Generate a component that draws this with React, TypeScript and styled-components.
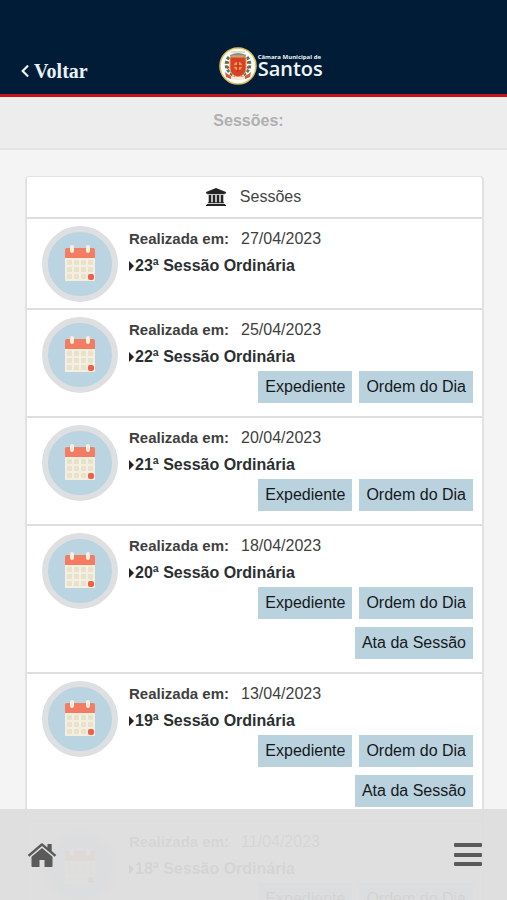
import React from "react";
import styled, { createGlobalStyle } from "styled-components";
import { FaChevronLeft } from "react-icons/fa";

const GlobalStyle = createGlobalStyle`
  * { box-sizing: border-box; }
  html { scrollbar-width: none; }
  body {
    margin: 0;
    background: #f4f4f4;
    color: #333;
    font-family: "Liberation Sans", Arial, sans-serif;
    font-size: 16px;
  }
`;

const Header = styled.header`
  display: grid;
  grid-template-columns: 11fr auto 9fr;
  align-items: center;
  height: 97px;
  padding: 37px 20px 0 18px;
  background: #001c36;
  border-bottom: 3px solid #c5161f;
`;

const BackLink = styled.a`
  display: flex;
  align-items: center;
  gap: 2px;
  padding-top: 10px;
  color: #e9f1f8;
  font: bold 20px/24px "Liberation Serif", serif;
  text-decoration: none;
`;

const Brand = styled.a`
  display: flex;
  align-items: center;
  gap: 1px;
  color: #f1f5f8;
  text-decoration: none;
`;

const BrandText = styled.span`
  display: flex;
  flex-direction: column;
  font-family: "Open Sans", sans-serif;
`;

const BrandSmall = styled.span`
  font-size: 6px;
  font-weight: 700;
  line-height: 6px;
`;

const BrandName = styled.span`
  font-size: 20px;
  font-weight: 600;
  line-height: 18px;
`;

const TitleBar = styled.h1`
  display: flex;
  align-items: center;
  justify-content: center;
  height: 53px;
  margin: 0;
  padding: 0 10px 4px 0;
  background: #ededed;
  border-bottom: 2px solid #e3e3e3;
  color: #b0b0b0;
  font-size: 16px;
  font-weight: 700;
`;

const Card = styled.main`
  margin: 26px 23px 100px 25px;
  background: #fff;
  border: 2px solid #e2e2e2;
  border-top-width: 1px;
  border-radius: 4px;
`;

const CardTitle = styled.h2`
  display: flex;
  align-items: center;
  justify-content: center;
  gap: 14px;
  height: 42px;
  margin: 0;
  padding-right: 2px;
  border-bottom: 2px solid #dedede;
  color: #444;
  font-size: 16px;
  font-weight: 400;
`;

const List = styled.ul`
  margin: 0;
  padding: 0;
  list-style: none;
`;

const Item = styled.li`
  display: flex;
  gap: 11px;
  padding: 7px 9px 6px 15px;
  border-bottom: 2px solid #dedede;
`;

const Avatar = styled.span`
  display: grid;
  place-items: center;
  flex: none;
  width: 76px;
  height: 76px;
  border: 6px solid #dddfe0;
  border-radius: 50%;
  background: #bad4e1;
`;

const Details = styled.div`
  flex: 1;
  min-width: 0;
`;

const Meta = styled.p`
  display: flex;
  align-items: baseline;
  gap: 12px;
  height: 26px;
  margin: 0;
  color: #3f3f3f;
  line-height: 26px;
`;

const MetaLabel = styled.b`
  font-size: 15px;
`;

const DateText = styled.time`
  font-size: 16px;
`;

const SessionTitle = styled.h3`
  display: flex;
  align-items: center;
  gap: 1px;
  height: 28px;
  margin: 0;
  color: #2b2f31;
  font-size: 16px;
`;

const Actions = styled.div`
  display: flex;
  flex-wrap: wrap;
  justify-content: flex-end;
  gap: 8px 7px;
  padding: 0 0 7px 40px;
`;

const ActionButton = styled.button`
  height: 32px;
  padding: 0 7px;
  border: 0;
  background: #bad2de;
  color: #15191c;
  font: 16px "Liberation Sans", Arial, sans-serif;
`;

const BottomBar = styled.nav`
  position: fixed;
  right: 0;
  bottom: 0;
  left: 0;
  display: flex;
  align-items: center;
  justify-content: space-between;
  height: 91px;
  padding: 0 25px 0 27px;
  background: rgba(221, 221, 221, 0.95);
`;

const BarButton = styled.button`
  display: flex;
  padding: 0;
  border: 0;
  background: none;
  color: #5a5a5a;
`;

const Crest = () => (
  <svg width="38" height="38" viewBox="0 0 38 38" aria-hidden="true">
    <circle cx="19" cy="19" r="18" fill="#fff" stroke="#e2bd55" strokeWidth="1.6" />
    <path d="M11 8q8-4 16 0l-1 3H12z" fill="#8c8d84" />
    <path d="M12 5h14M13 9h12" stroke="#c8b78a" strokeWidth="1" />
    <path d="M10 10C4 17 8 26 16 29M28 10c6 7 2 16-6 19" fill="none" stroke="#458059" strokeWidth="3" strokeDasharray="3 1.5" />
    <path d="M8 15l2 1M8 21l2-1M30 15l-2 1M30 21l-2-1" stroke="#c83d32" strokeWidth="2" />
    <path d="M11 10h16v12q0 6-8 8-8-2-8-8z" fill="#d8402c" stroke="#e2aa4a" />
    <circle cx="19" cy="19" r="4.2" fill="#ef9b3d" />
    <path d="M19 13v12M15 19h8" stroke="#c92f26" strokeWidth="1.6" />
    <path d="M6 25q5 5 13 5t13-5l-1 5-5 2H12l-5-2z" fill="#d95540" />
    <path d="M12 29q7 2 14 0v3q-7 2-14 0z" fill="#f7e6d6" />
  </svg>
);

const CalendarIcon = () => (
  <svg width="32" height="40" viewBox="0 0 32 40" aria-hidden="true">
    <path d="M1 13h30v24H1z" fill="#f6efdf" />
    <path d="M3 4h26a2 2 0 0 1 2 2v8H1V6a2 2 0 0 1 2-2z" fill="#f47c62" />
    <rect x="6" y="1" width="4" height="8" rx="2" fill="#f8efdf" />
    <rect x="22" y="1" width="4" height="8" rx="2" fill="#f8efdf" />
    <g fill="#e6e2cc">
      {[16, 23, 30].map((y) =>
        [3, 10, 17, 24].map((x) => <rect key={`${x}-${y}`} x={x} y={y} width="5" height="5" />)
      )}
    </g>
    <rect x="24" y="30" width="6" height="6" rx="2" fill="#ee6047" />
  </svg>
);

const BankIcon = () => (
  <svg width="20" height="18" viewBox="0 0 20 18" fill="#252525" aria-hidden="true">
    <path d="M10 0l10 4v1.4h-1.3v.8H1.3v-.8H0V4z" />
    <path d="M2.7 7h2.6v7.3h1.4V7h2.6v7.3h1.4V7h2.6v7.3h1.4V7h2.6v7.3h.8v1H1.9v-1h.8z" />
    <path d="M1 16h18v.8h1V18H0v-1.2h1z" />
  </svg>
);

const Caret = () => (
  <svg width="5" height="10" viewBox="0 0 5 10" fill="#222" aria-hidden="true">
    <path d="M0 0l5 5-5 5z" />
  </svg>
);

const HomeIcon = () => (
  <svg width="30" height="26" viewBox="0 0 30 26" fill="#5a5a5a" aria-hidden="true">
    <path d="M15 6l10.5 8.8V24q0 1-1 1h-7v-7h-5v7h-7q-1 0-1-1v-9.2z" />
    <path d="M15 1l5.5 4.6V2h4.2v7.1l4.6 3.8-1.6 1.9L15 4.1 2.3 14.8.7 12.9 13.8 1.7Q15 .6 16.2 1.7z" />
  </svg>
);

const MenuIcon = () => (
  <svg width="28" height="26" viewBox="0 0 28 26" fill="#5a5a5a" aria-hidden="true">
    <rect y="1" width="28" height="4" rx="1" />
    <rect y="11" width="28" height="4" rx="1" />
    <rect y="20" width="28" height="4" rx="1" />
  </svg>
);

const BOTH = ["Expediente", "Ordem do Dia"];
const ALL = [...BOTH, "Ata da Sessão"];

const sessions = [
  { date: "27/04/2023", number: 23, actions: [] as string[] },
  { date: "25/04/2023", number: 22, actions: BOTH },
  { date: "20/04/2023", number: 21, actions: BOTH },
  { date: "18/04/2023", number: 20, actions: ALL },
  { date: "13/04/2023", number: 19, actions: ALL },
  { date: "11/04/2023", number: 18, actions: ALL },
];

export default function App() {
  return (
    <>
      <GlobalStyle />
      <Header>
        <BackLink href="#voltar">
          <FaChevronLeft size={14} />
          Voltar
        </BackLink>
        <Brand href="#inicio">
          <Crest />
          <BrandText>
            <BrandSmall>Câmara Municipal de</BrandSmall>
            <BrandName>Santos</BrandName>
          </BrandText>
        </Brand>
      </Header>
      <TitleBar>Sessões:</TitleBar>
      <Card>
        <CardTitle>
          <BankIcon />
          Sessões
        </CardTitle>
        <List>
          {sessions.map(({ date, number, actions }) => (
            <Item key={number}>
              <Avatar>
                <CalendarIcon />
              </Avatar>
              <Details>
                <Meta>
                  <MetaLabel>Realizada em:</MetaLabel>
                  <DateText>{date}</DateText>
                </Meta>
                <SessionTitle>
                  <Caret />
                  {number}ª Sessão Ordinária
                </SessionTitle>
                {actions.length > 0 && (
                  <Actions>
                    {actions.map((label) => (
                      <ActionButton key={label} type="button">{label}</ActionButton>
                    ))}
                  </Actions>
                )}
              </Details>
            </Item>
          ))}
        </List>
      </Card>
      <BottomBar>
        <BarButton type="button" aria-label="Início">
          <HomeIcon />
        </BarButton>
        <BarButton type="button" aria-label="Menu">
          <MenuIcon />
        </BarButton>
      </BottomBar>
    </>
  );
}
